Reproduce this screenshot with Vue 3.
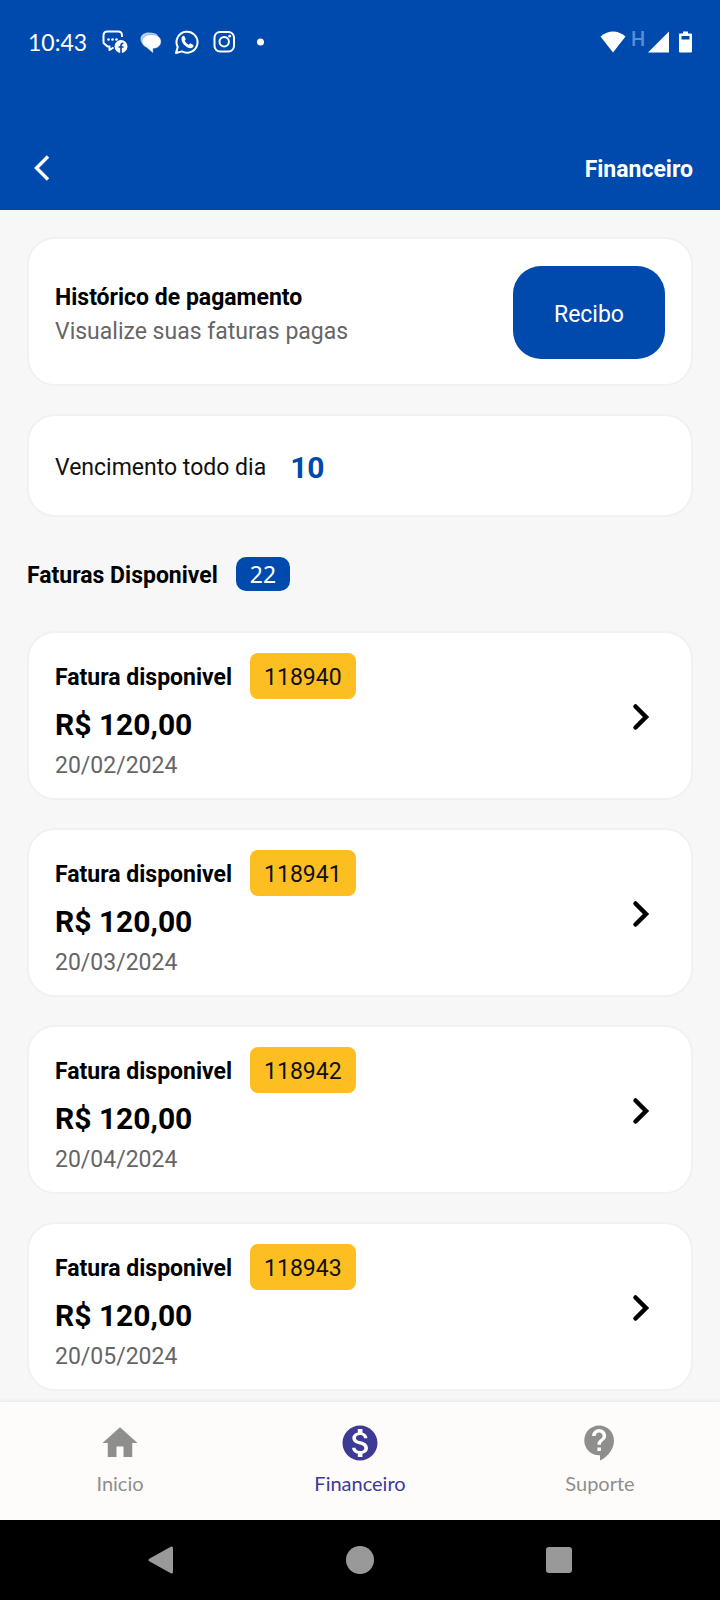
<script setup>
const invoices = [
  { id: '118940', amount: 'R$ 120,00', date: '20/02/2024' },
  { id: '118941', amount: 'R$ 120,00', date: '20/03/2024' },
  { id: '118942', amount: 'R$ 120,00', date: '20/04/2024' },
  { id: '118943', amount: 'R$ 120,00', date: '20/05/2024' },
]

const tabs = [
  { label: 'Inicio', active: false, icon: 'M10 20v-6h4v6h5v-8h3L12 3 2 12h3v8z' },
  {
    label: 'Financeiro',
    active: true,
    icon: 'M12 2C6.48 2 2 6.48 2 12s4.48 10 10 10 10-4.48 10-10S17.52 2 12 2zm1.41 16.09V20h-2.67v-1.93c-1.71-.36-3.16-1.46-3.27-3.4h1.96c.1 1.05.82 1.87 2.65 1.87 1.96 0 2.4-.98 2.4-1.59 0-.83-.44-1.61-2.67-2.14-2.48-.6-4.18-1.62-4.18-3.67 0-1.72 1.39-2.84 3.11-3.21V4h2.67v1.95c1.86.45 2.79 1.86 2.85 3.39H14.3c-.05-1.11-.64-1.87-2.22-1.87-1.5 0-2.4.68-2.4 1.64 0 .84.65 1.39 2.67 1.91s4.18 1.39 4.18 3.91c-.01 1.83-1.38 2.83-3.12 3.16z',
  },
  {
    label: 'Suporte',
    active: false,
    icon: 'M11.5 2C6.81 2 3 5.81 3 10.5S6.81 19 11.5 19h.5v3c4.86-2.34 8-7 8-11.5C20 5.81 16.19 2 11.5 2zm1 14.5h-2v-2h2v2zm0-3.5h-2c0-3.25 3-3 3-5 0-1.1-.9-2-2-2s-2 .9-2 2h-2c0-2.21 1.79-4 4-4s4 1.79 4 4c0 2.5-3 2.75-3 5z',
  },
]
</script>

<template>
  <div class="screen">
    <header class="header">
      <div class="status">
        <span class="clock">10:43</span>
        <div class="notices">
          <svg class="notice" viewBox="0 0 26 26" aria-hidden="true">
            <path d="M11.500 18.500L7.500 21v-3.500H5.500L1.500 14V6.500Q1.500 2.500 5.500 2.500h10.500q4 0 4 4V8" fill="none" stroke="#fff" stroke-width="2" stroke-linejoin="round" />
            <circle cx="6.500" cy="10.500" r="1.300" fill="#fff" />
            <circle cx="10.500" cy="10.500" r="1.300" fill="#fff" />
            <circle cx="14.500" cy="10.500" r="1.300" fill="#fff" />
            <circle cx="19" cy="17.500" r="6.500" fill="#fff" />
            <path d="M19 23.900v-7.500q0-2.200 2.400-1.900M16.500 18h5" fill="none" stroke="#004aad" stroke-width="1.700" />
          </svg>
          <svg class="notice" viewBox="0 0 26 26" aria-hidden="true">
            <path d="M11 3.500c4 0 7 .8 9 3L5 15.500C3.500 14 2.500 12 2.500 10c0-4 3.500-6.500 8.500-6.500z" fill="#b4d0f7" />
            <path d="M13.500 5.500c5.500 0 9.500 2.800 9.500 7s-3.500 7-8 7v4.500l-6-5.300c-3-1.200-5-3.400-5-6.200 0-4.200 4-7 9.500-7z" fill="#fff" stroke="#5c8ed2" stroke-width=".5" />
          </svg>
          <svg class="notice" viewBox="0 0 26 26" aria-hidden="true">
            <path d="M2 24l1.700-6A10.500 10.500 0 1 1 8 22.400z" fill="none" stroke="#fff" stroke-width="2" stroke-linejoin="round" />
            <path d="M8.200 7.500c.9-1 2-.9 2.400 0l1 2.400c.2.600-.1 1-.9 1.900.9 1.900 2.300 3.200 4.200 4 .8-1 1.200-1.500 1.800-1.200l2.300 1.100c.9.500.6 2.100-.4 2.900-2 1.500-5 .5-8-2.300S6.700 9.500 8.200 7.500z" fill="#fff" />
          </svg>
          <svg class="notice" viewBox="0 0 26 26" aria-hidden="true">
            <rect x="4.500" y="3" width="19.500" height="19.500" rx="5.500" fill="none" stroke="#fff" stroke-width="2" />
            <circle cx="14.200" cy="12.700" r="4.700" fill="none" stroke="#fff" stroke-width="2" />
            <circle cx="19.700" cy="7.200" r="1.400" fill="#fff" />
          </svg>
          <svg class="notice" viewBox="0 0 26 26" aria-hidden="true">
            <circle cx="14.500" cy="13" r="3.500" fill="#fff" />
          </svg>
        </div>
        <div class="signals">
          <svg width="26" height="22" viewBox="0 0 26 22" aria-hidden="true">
            <path d="M.5 5.500Q13-4.500 25.500 5.500L13 21.500z" fill="#fff" />
          </svg>
          <span class="network">H</span>
          <svg width="21" height="22" viewBox="0 0 21 22" aria-hidden="true">
            <path d="M21 .5v21H0z" fill="#fff" />
          </svg>
          <svg class="battery" width="13" height="22" viewBox="0 0 13 22" aria-hidden="true">
            <path fill-rule="evenodd" d="M4 .5h5v2h3q1 0 1 1v17q0 1-1 1H1q-1 0-1-1v-17q0-1 1-1h3zM2.500 5v3.500h8V5z" fill="#fff" />
          </svg>
        </div>
      </div>
      <div class="appbar">
        <button class="back" type="button" aria-label="Voltar">
          <svg width="16" height="28" viewBox="0 0 16 28" aria-hidden="true">
            <path d="M14 2.500L2.500 14 14 25.500" fill="none" stroke="#fff" stroke-width="3.400" />
          </svg>
        </button>
        <h1 class="title">Financeiro</h1>
      </div>
    </header>

    <main class="content">
      <section class="card history">
        <div class="summary">
          <h2 class="strong">Histórico de pagamento</h2>
          <p class="muted">Visualize suas faturas pagas</p>
        </div>
        <button class="receipt" type="button">Recibo</button>
      </section>

      <section class="card due">
        <span>Vencimento todo dia</span>
        <strong class="day">10</strong>
      </section>

      <div class="heading">
        <h2 class="strong label">Faturas Disponivel</h2>
        <span class="count">22</span>
      </div>

      <ul class="list">
        <li v-for="invoice in invoices" :key="invoice.id">
          <a class="card invoice" href="#">
            <div>
              <div class="row">
                <span class="strong label">Fatura disponivel</span>
                <span class="tag">{{ invoice.id }}</span>
              </div>
              <div class="amount">{{ invoice.amount }}</div>
              <div class="date">{{ invoice.date }}</div>
            </div>
            <svg width="18" height="28" viewBox="0 0 18 28" aria-hidden="true">
              <path d="M3.500 3.500L14 14 3.500 24.500" fill="none" stroke="#000" stroke-width="4.500" stroke-linecap="round" />
            </svg>
          </a>
        </li>
      </ul>
    </main>

    <nav class="tabs">
      <a v-for="tab in tabs" :key="tab.label" class="tab" :class="{ active: tab.active }" href="#">
        <svg width="42" height="42" viewBox="0 0 24 24" aria-hidden="true">
          <path :d="tab.icon" fill="currentColor" />
        </svg>
        <span>{{ tab.label }}</span>
      </a>
    </nav>

    <div class="system">
      <button type="button" aria-label="Voltar do sistema">
        <svg width="28" height="30" viewBox="0 0 28 30" aria-hidden="true">
          <path d="M3 15L24.500 3v24z" fill="#999" stroke="#999" stroke-width="3" stroke-linejoin="round" />
        </svg>
      </button>
      <button type="button" aria-label="Tela inicial">
        <svg width="28" height="28" viewBox="0 0 28 28" aria-hidden="true">
          <circle cx="14" cy="14" r="14" fill="#999" />
        </svg>
      </button>
      <button type="button" aria-label="Aplicativos recentes">
        <svg width="26" height="26" viewBox="0 0 26 26" aria-hidden="true">
          <rect width="26" height="26" rx="3" fill="#999" />
        </svg>
      </button>
    </div>
  </div>
</template>

<style>
body {
  margin: 0;
  background: #f7f7f7;
}
</style>

<style scoped>
.screen {
  display: flex;
  flex-direction: column;
  min-height: 100vh;
  font-family: Roboto, 'Liberation Sans', sans-serif;
  font-size: 23px;
  line-height: 34px;
  color: #111;
}

.screen *,
.screen {
  box-sizing: border-box;
}

h1,
h2,
p,
ul {
  margin: 0;
  padding: 0;
}

button {
  border: 0;
  padding: 0;
  background: none;
  font: inherit;
  color: inherit;
}

a {
  color: inherit;
  text-decoration: none;
}

svg {
  display: block;
  flex: none;
}

.header {
  background: #004aad;
  color: #fff;
}

.status {
  display: flex;
  align-items: center;
  height: 84px;
  padding: 0 28px;
}

.clock {
  font-family: Lato, sans-serif;
  font-size: 23px;
  width: 74px;
}

.notices {
  display: flex;
  gap: 10px;
}

.notice {
  width: 26px;
  height: 26px;
}

.signals {
  display: flex;
  align-items: center;
  margin-left: auto;
}

.network {
  width: 22px;
  padding: 0 0 6px 2px;
  font-size: 20px;
  line-height: 20px;
  font-weight: 500;
  text-align: center;
  color: #5c8ed2;
}

.battery {
  margin-left: 10px;
}

.appbar {
  display: flex;
  align-items: center;
  justify-content: space-between;
  height: 84px;
  margin-top: 42px;
  padding: 0 27px 0 34px;
}

.title,
.strong {
  font-size: 23px;
  font-weight: 700;
}

.strong {
  color: #000;
}

.title,
.label,
.summary {
  padding-top: 4px;
}

.content {
  flex: 1;
  padding: 27px 27px 11px;
  background: #f7f7f7;
}

.card {
  display: flex;
  align-items: center;
  border: 2px solid #f1f1f1;
  border-radius: 28px;
  background: #fff;
}

.history {
  justify-content: space-between;
  padding: 27px 26px 25px;
}

.muted,
.date {
  color: #666;
}

.receipt {
  padding: 32px 41px 27px;
  border-radius: 28px;
  background: #004aad;
  color: #fff;
}

.due {
  gap: 24px;
  margin-top: 28px;
  padding: 35px 26px 30px;
}

.day {
  font-size: 30px;
  color: #004aad;
}

.heading {
  display: flex;
  align-items: center;
  gap: 18px;
  height: 34px;
  margin: 40px 0;
}

.count {
  padding: 0 14px;
  border-radius: 10px;
  background: #004aad;
  color: #fff;
  font-family: 'Noto Sans', sans-serif;
}

.list {
  display: grid;
  gap: 28px;
  list-style: none;
}

.invoice {
  justify-content: space-between;
  padding: 20px 41px 17px 26px;
}

.row {
  display: flex;
  align-items: center;
  gap: 18px;
}

.tag {
  padding: 8px 14px 4px;
  border-radius: 8px;
  background: #fdbe22;
}

.amount {
  font-size: 30px;
  line-height: 52px;
  font-weight: 700;
  color: #000;
}

.date {
  line-height: 30px;
}

.tabs {
  display: flex;
  padding: 20px 0 25px;
  background: #fdfcfa;
  box-shadow: 0 -1px 4px rgba(0, 0, 0, 0.07);
}

.tab {
  display: flex;
  flex: 1;
  flex-direction: column;
  align-items: center;
  gap: 7px;
  font-family: Lato, sans-serif;
  font-size: 20px;
  line-height: 24px;
  color: #8e8e8d;
}

.active {
  color: #3c3a94;
}

.system {
  display: grid;
  grid-template-columns: repeat(3, 1fr);
  height: 80px;
  padding: 0 62px;
  background: #000;
}

.system button {
  display: flex;
  align-items: center;
  justify-content: center;
}
</style>
